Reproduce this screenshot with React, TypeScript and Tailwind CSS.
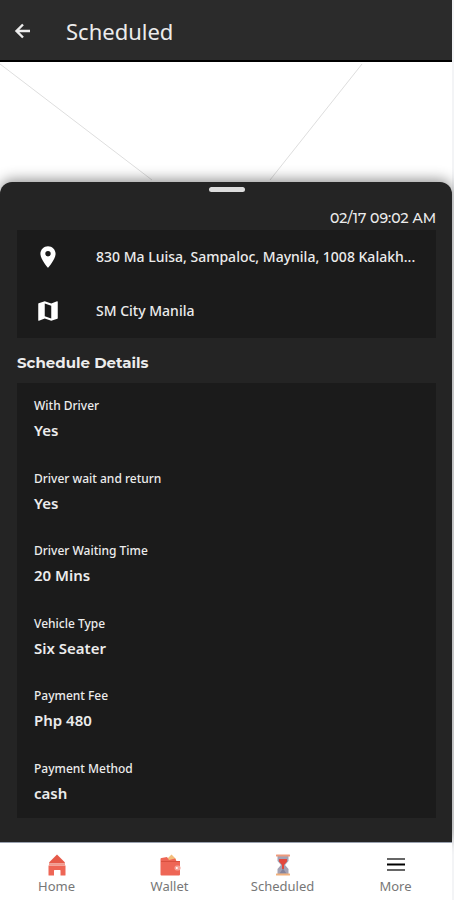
import { MdLocationOn, MdMap } from "react-icons/md";

interface Detail {
  label: string;
  value: string;
}

const details: Detail[] = [
  { label: "With Driver", value: "Yes" },
  { label: "Driver wait and return", value: "Yes" },
  { label: "Driver Waiting Time", value: "20 Mins" },
  { label: "Vehicle Type", value: "Six Seater" },
  { label: "Payment Fee", value: "Php 480" },
  { label: "Payment Method", value: "cash" },
];

function BackIcon() {
  return (
    <svg className="w-[22px] h-[22px]" viewBox="0 0 22 22" fill="none">
      <path d="M11 4.500 4.500 11l6.500 6.500M4.500 11H18" stroke="currentColor" strokeWidth="2.400" />
    </svg>
  );
}

function HomeIcon() {
  return (
    <svg className="w-5 h-[22px]" viewBox="0 0 20 22" fill="none">
      <path d="M10 0.5 18 8.5v1H2v-1z" fill="#e65a49" />
      <path d="M1.5 11.5h17v9.500q0 .5-.5.5h-4.500v-5q0-.5-.5-.5H7.500q-.5 0-.5.5v5H2q-.5 0-.5-.5z" fill="#ee6656" />
      <rect x="2" y="9.5" width="16" height="2" fill="#f19a8e" />
    </svg>
  );
}

function WalletIcon() {
  return (
    <svg className="w-[22px] h-[22px]" viewBox="0 0 22 22" fill="none">
      <path d="M7 6 12.5 0.5 17 5v2H7z" fill="#f3bd7c" />
      <path d="M2.500 4 8 3l2 3 6-1.500L17.500 7H21v13.500q0 1-1 1H2.500q-1 0-1-1V5q0-1 1-1z" fill="#ee6656" />
      <path d="M2 7.500h19" stroke="#d9503f" />
      <rect x="15.500" y="11.500" width="6" height="5" rx="2" fill="#f5a196" />
      <circle cx="17.800" cy="14" r="1" fill="#fff" />
    </svg>
  );
}

function HourglassIcon() {
  return (
    <svg className="w-4 h-[22px]" viewBox="0 0 16 22" fill="none">
      <path d="M2.500 2h11v5L10 11l3.500 4v5h-11v-5L6 11 2.500 7z" fill="#a3a1b3" />
      <path d="M4 5h8v2.500L9 11v4H7v-4L4 7.500z" fill="#e3483d" />
      <path d="M8 14.500 11.500 19.500h-7z" fill="#85839a" />
      <rect x="1" y="0.500" width="14" height="2" rx="0.500" fill="#ee9a7c" />
      <rect x="1" y="19.500" width="14" height="2" rx="0.500" fill="#f0b07c" />
    </svg>
  );
}

function MenuIcon() {
  return (
    <svg className="w-5 h-[22px]" viewBox="0 0 20 22" fill="none">
      <path d="M1 5h18M1 16h18" stroke="#666" strokeWidth="2" />
      <path d="M1 10.500h18" stroke="#000" strokeWidth="2" />
    </svg>
  );
}

const tabs = [
  { name: "Home", icon: <HomeIcon /> },
  { name: "Wallet", icon: <WalletIcon /> },
  { name: "Scheduled", icon: <HourglassIcon /> },
  { name: "More", icon: <MenuIcon /> },
];

export default function App() {
  return (
    <div className="min-h-screen flex flex-col bg-white border-r-2 border-gray-100 font-['Noto_Sans',sans-serif]">
      <header className="h-[62px] flex items-center gap-8 px-3 pt-[2px] bg-[#2b2b2b] border-b-2 border-black text-[#ececec]">
        <button type="button" aria-label="Back">
          <BackIcon />
        </button>
        <h1 className="text-[22px] leading-8">Scheduled</h1>
      </header>

      {/* Map placeholder */}
      <div className="h-[120px] overflow-hidden">
        <svg className="w-full h-full" viewBox="0 0 452 120" preserveAspectRatio="none" fill="none">
          <path d="M0 2 152 118M362 2 270 118" stroke="#dedede" />
        </svg>
      </div>

      <main className="relative flex-1 flex flex-col pl-[17px] pr-4 pb-6 rounded-t-xl bg-[#242424] text-[#ececec] shadow-[0_-2px_14px_rgba(0,0,0,0.45)]">
        <div className="w-9 h-[5px] mt-[5px] mx-auto rounded-sm bg-[#dcdcdc]" />
        <p className="mt-4 mb-[2px] text-right text-sm font-medium font-['Montserrat','Inter',sans-serif]">
          02/17 09:02 AM
        </p>

        <section className="bg-[#1b1b1b] px-[18px]">
          <div className="h-[54px] flex items-center gap-[35px]">
            <MdLocationOn className="w-[26px] h-[26px] shrink-0 text-white" />
            <p className="text-sm font-medium">830 Ma Luisa, Sampaloc, Maynila, 1008 Kalakh...</p>
          </div>
          <div className="h-[54px] flex items-center gap-[35px]">
            <MdMap className="w-[26px] h-[26px] shrink-0 text-white" />
            <p className="text-sm font-medium">SM City Manila</p>
          </div>
        </section>

        <h2 className="mt-[13px] mb-2 text-[15px] leading-6 font-bold font-['Montserrat','Noto_Sans',sans-serif]">
          Schedule Details
        </h2>

        <dl className="flex-1 flex flex-col justify-between px-[17px] py-[13px] bg-[#1b1b1b]">
          {details.map((item) => (
            <div key={item.label}>
              <dt className="text-xs leading-5 font-medium">{item.label}</dt>
              <dd className="mt-[2px] text-[15px] leading-6 font-semibold">{item.value}</dd>
            </div>
          ))}
        </dl>
      </main>

      <nav className="relative h-[58px] grid grid-cols-4 bg-white border-t border-gray-400">
        {tabs.map((tab) => (
          <a key={tab.name} href="#" className="flex flex-col items-center pt-[11px] text-[13px] leading-5 text-[#777]">
            {tab.icon}
            {tab.name}
          </a>
        ))}
      </nav>
    </div>
  );
}
